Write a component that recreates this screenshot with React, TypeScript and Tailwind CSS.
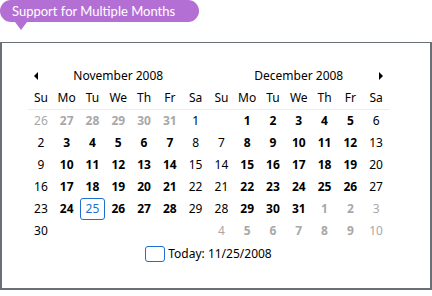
type Day = { n: number; muted?: boolean; today?: boolean };

const buildMonth = (lead: number[], count: number, trail: number[], today?: number): Day[] => [
  ...lead.map((n) => ({ n, muted: true })),
  ...Array.from({ length: count }, (_, i) => ({ n: i + 1, today: i + 1 === today })),
  ...trail.map((n) => ({ n, muted: true })),
];

const november = buildMonth([26, 27, 28, 29, 30, 31], 30, [], 25);
// Dec 1 2008 is a Monday, leading Sunday cell stays empty
const december = buildMonth([0], 31, [1, 2, 3, 4, 5, 6, 7, 8, 9, 10]);
const DAY_NAMES = ["Su", "Mo", "Tu", "We", "Th", "Fr", "Sa"];

const MonthGrid = ({ days }: { days: Day[] }) => (
  <div className="grid grid-cols-7">
    {days.map((d, i) => {
      const weekend = i % 7 === 0 || i % 7 === 6;
      return (
        <div key={i} className="flex h-[22px] items-center justify-center">
          {d.n > 0 && (
            <span
              className={
                d.today
                  ? "flex h-[22px] w-full items-center justify-center rounded-[3px] border border-[#1e6fd0] font-normal text-[#1e6fd0]"
                  : `${weekend ? "font-normal" : "font-bold"} ${d.muted ? "text-[#a8a8a8]" : "text-black"}`
              }
            >
              {d.n}
            </span>
          )}
        </div>
      );
    })}
  </div>
);

export default function App() {
  return (
    <div className="h-[296px] w-[432px] overflow-hidden bg-white font-['Noto_Sans',sans-serif] text-[12px] leading-4 text-black">
      <div className="relative h-[30px]">
        <div className="flex h-[22px] w-[199px] items-center rounded-full bg-[#b46fd4] pl-3 font-['Lato',sans-serif] text-[13px] text-white">
          Support for Multiple Months
        </div>
        <div className="absolute left-[15px] top-[22px] h-0 w-0 border-x-[6px] border-t-[8px] border-x-transparent border-t-[#b46fd4]" />
      </div>
      <div className="mt-3 h-[248px] border-2 border-t-[1px] border-[#6b7078] pl-[26px] pt-[23px]">
        <div className="flex h-5 w-[361px] items-center">
          <div className="relative flex w-1/2 items-center justify-center">
            <span className="absolute left-[6px] h-0 w-0 border-y-[4px] border-r-[4px] border-y-transparent border-r-black" />
            <span>November 2008</span>
          </div>
          <div className="relative flex w-1/2 items-center justify-center">
            <span>December 2008</span>
            <span className="absolute right-[6px] h-0 w-0 border-y-[4px] border-l-[4px] border-y-transparent border-l-black" />
          </div>
        </div>
        <div className="mt-[2px] grid w-[361px] grid-cols-14 border-b border-[#ececec] pb-[1px]">
          {[...DAY_NAMES, ...DAY_NAMES].map((name, i) => (
            <div key={i} className="flex h-5 items-center justify-center">
              {name}
            </div>
          ))}
        </div>
        <div className="flex w-[361px]">
          <div className="w-1/2">
            <MonthGrid days={november} />
          </div>
          <div className="w-1/2">
            <MonthGrid days={december} />
          </div>
        </div>
        <div className="mt-[4px] flex w-[361px] items-center justify-center gap-[3px]">
          <span className="h-4 w-5 rounded-[3px] border border-[#1e6fd0]" />
          <span>Today: 11/25/2008</span>
        </div>
      </div>
    </div>
  );
}
